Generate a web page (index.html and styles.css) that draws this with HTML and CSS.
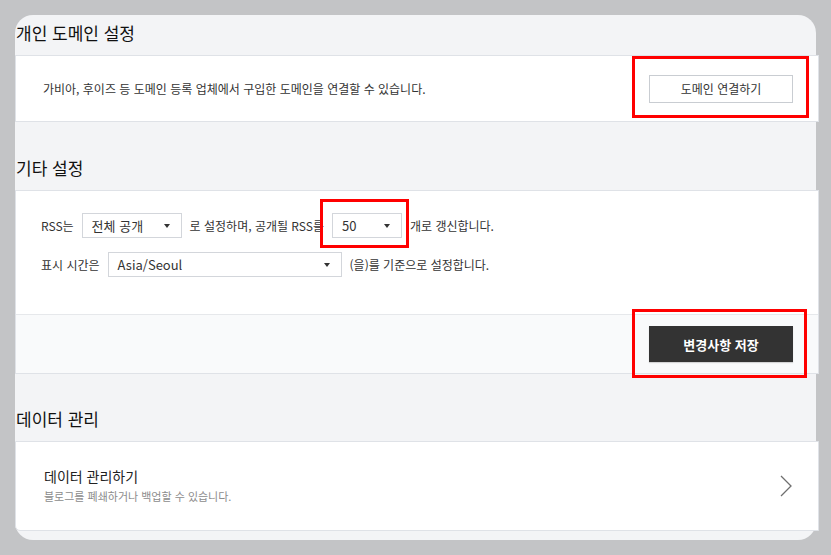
FILE: index.html
```html
<!DOCTYPE html>
<html lang="ko">
<head>
<meta charset="utf-8">
<title>블로그 설정</title>
<link rel="stylesheet" href="styles.css">
</head>
<body>
<div class="panel">
  <section class="section section-first">
    <h2 class="section-title">개인 도메인 설정</h2>
    <div class="card card-domain">
      <p class="desc">가비아, 후이즈 등 도메인 등록 업체에서 구입한 도메인을 연결할 수 있습니다.</p>
      <button class="btn-outline" type="button">도메인 연결하기</button>
    </div>
  </section>

  <section class="section">
    <h2 class="section-title">기타 설정</h2>
    <div class="card">
      <div class="card-body">
        <div class="form-row">
          <span class="label">RSS는</span>
          <div class="select select-rss"><span>전체 공개</span><i class="caret"></i></div>
          <span class="label">로 설정하며, 공개될 RSS를</span>
          <div class="select select-count"><span>50</span><i class="caret"></i></div>
          <span class="label">개로 갱신합니다.</span>
        </div>
        <div class="form-row">
          <span class="label">표시 시간은</span>
          <div class="select select-tz"><span>Asia/Seoul</span><i class="caret"></i></div>
          <span class="label">(을)를 기준으로 설정합니다.</span>
        </div>
      </div>
      <div class="card-footer">
        <button class="btn-dark" type="button">변경사항 저장</button>
      </div>
    </div>
  </section>

  <section class="section">
    <h2 class="section-title">데이터 관리</h2>
    <div class="card card-link">
      <div class="link-text">
        <div class="link-title">데이터 관리하기</div>
        <div class="link-sub">블로그를 폐쇄하거나 백업할 수 있습니다.</div>
      </div>
      <svg class="chevron" width="12" height="22" viewBox="0 0 12 22" aria-hidden="true">
        <path d="M1 1 L11 11 L1 21" fill="none" stroke="#6f6f6f" stroke-width="1.3"/>
      </svg>
    </div>
  </section>
</div>

<div class="mark mark-domain"></div>
<div class="mark mark-count"></div>
<div class="mark mark-save"></div>
</body>
</html>
```

FILE: styles.css
```css
* { box-sizing: border-box; }

html, body {
  margin: 0;
  padding: 0;
}

body {
  background: #c3c4c6;
  font-family: "Noto Sans CJK KR", "Noto Sans", sans-serif;
  color: #333;
  width: 831px;
  height: 555px;
  overflow: hidden;
  position: relative;
}

.panel {
  margin: 15px 0 0 15px;
  width: 801px;
  height: 525px;
  background: #f3f4f6;
  border-radius: 18px;
  padding-top: 4px;
}

.section { margin-top: 32px; }
.section-first { margin-top: 0; }
.section:last-child { margin-top: 31px; }

.section-title {
  margin: 0;
  padding: 0 0 8px 1px;
  font-size: 17px;
  line-height: 28px;
  font-weight: 400;
  color: #111;
}

.card {
  width: 804px;
  background: #fff;
  border: 1px solid #dfe2e7;
}

.card-domain {
  height: 67px;
  display: flex;
  align-items: center;
  justify-content: space-between;
  padding: 0 25px 0 27px;
}

.desc {
  margin: 0;
  font-size: 12px;
  color: #333;
}

.btn-outline {
  width: 144px;
  height: 28px;
  background: #fff;
  border: 1px solid #c9cdd2;
  font-family: inherit;
  font-size: 12px;
  color: #333;
  padding: 0;
}

.card-body {
  padding: 22px 25px 37px;
  display: flex;
  flex-direction: column;
  gap: 14px;
}

.form-row {
  display: flex;
  align-items: center;
  gap: 8px;
  height: 25px;
  font-size: 12px;
}

.label { white-space: nowrap; }

.select {
  height: 25px;
  border: 1px solid #d3d6db;
  background: #fff;
  display: flex;
  align-items: center;
  justify-content: space-between;
  padding: 0 11px 0 9px;
  font-size: 13px;
  color: #333;
}

.select-rss { width: 100px; }
.select-count { width: 70px; }
.select-tz { width: 234px; }

.caret {
  width: 0;
  height: 0;
  border-left: 3px solid transparent;
  border-right: 3px solid transparent;
  border-top: 4px solid #333;
}

.card-footer {
  border-top: 1px solid #e6e8eb;
  background: #f9fafb;
  height: 59px;
  display: flex;
  align-items: center;
  justify-content: flex-end;
  padding-right: 25px;
}

.btn-dark {
  width: 144px;
  height: 36px;
  background: #333;
  color: #fff;
  border: 0;
  font-family: inherit;
  font-size: 13px;
  font-weight: 700;
  box-shadow: 0 1px 1px rgba(0,0,0,0.15);
}

.card-link {
  height: 90px;
  display: flex;
  align-items: center;
  justify-content: space-between;
  padding: 0 26px 0 28px;
  border-radius: 0 0 0 5px;
}

.link-title {
  font-size: 14px;
  line-height: 20px;
  color: #222;
}

.link-sub {
  font-size: 11px;
  line-height: 20px;
  color: #8c8c8c;
}

.chevron { display: block; }

.mark {
  position: absolute;
  border: 3px solid #ff0000;
}

.mark-domain { left: 632px; top: 56px; width: 177px; height: 62px; }
.mark-count { left: 320px; top: 199px; width: 89px; height: 49px; }
.mark-save { left: 632px; top: 309px; width: 175px; height: 69px; }
```
